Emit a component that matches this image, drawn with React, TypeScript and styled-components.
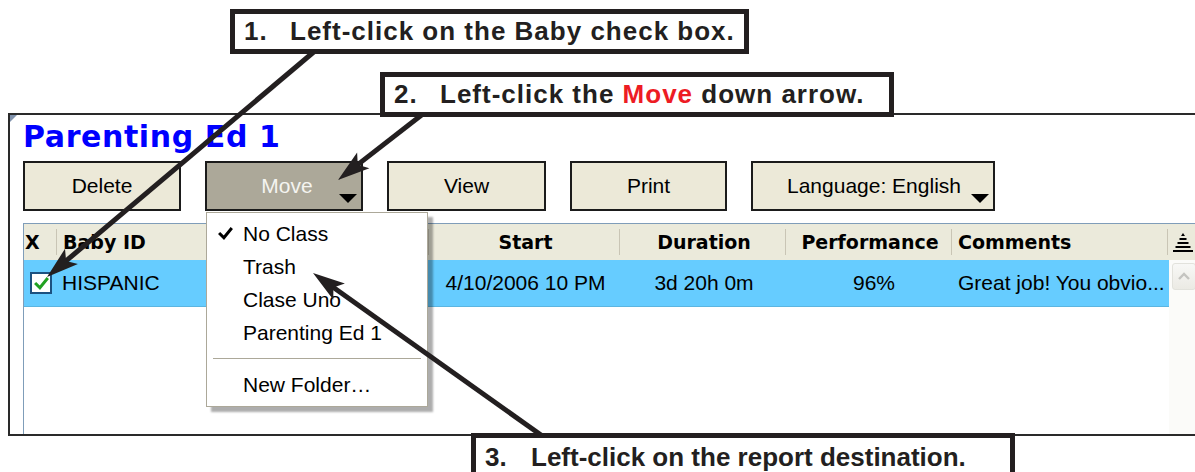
import React from 'react';
import styled, { createGlobalStyle, css } from 'styled-components';

const GlobalStyle = createGlobalStyle`
  html, body {
    margin: 0;
    padding: 0;
    background: #fff;
  }
`;

const uiFont = `'Liberation Sans', Arial, sans-serif`;
const boldUiFont = `'DejaVu Sans', Verdana, sans-serif`;
const ink = '#231f20';

// column widths shared by the list header and the rows
const columns = [
  { w: 34, align: 'left', pad: 1 },
  { w: 372, align: 'left', pad: 5 },
  { w: 191, align: 'center', pad: 0 },
  { w: 166, align: 'center', pad: 0 },
  { w: 166, align: 'center', pad: 0 },
  { w: 216, align: 'left', pad: 5 },
];

const Page = styled.div`
  position: relative;
  width: 1195px;
  height: 472px;
  overflow: hidden;
  box-sizing: border-box;
  padding: 113px 0 0 8px;
  background: #fff;
`;

const Window = styled.section`
  position: relative;
  width: 1195px;
  height: 323px;
  box-sizing: border-box;
  border: 2px solid #2a2a2a;
  border-right: none;
  display: flex;
  flex-direction: column;

  &::before {
    content: '';
    position: absolute;
    top: 0;
    left: 0;
    border-top: 7px solid #8193ad;
    border-right: 7px solid transparent;
  }
`;

const Title = styled.h1`
  margin: 0;
  padding: 7px 0 0 13px;
  font: 700 30px/30px ${boldUiFont};
  letter-spacing: 0.6px;
  color: #0000ff;
`;

const Toolbar = styled.div`
  display: flex;
  gap: 24px;
  margin-top: 9px;
  padding-left: 13px;
`;

const Button = styled.button<{ $w: number; $open?: boolean; $left?: boolean }>`
  position: relative;
  width: ${(p) => p.$w}px;
  height: 50px;
  box-sizing: border-box;
  border: 2px solid #1b1b1b;
  background: #ece9d8;
  color: #000;
  font: 21px ${uiFont};
  display: flex;
  align-items: center;
  justify-content: center;
  padding: 0;

  ${(p) =>
    p.$open &&
    css`
      background: #aca899;
      color: #f4f4f0;
      padding-left: 6px;
    `}

  ${(p) =>
    p.$left &&
    css`
      justify-content: flex-start;
      padding-left: 34px;
    `}
`;

const Caret = styled.span`
  position: absolute;
  right: 4px;
  bottom: 6px;
  width: 0;
  height: 0;
  border-left: 9px solid transparent;
  border-right: 9px solid transparent;
  border-top: 9px solid #000;
`;

const List = styled.div`
  flex: 1;
  margin: 12px 0 0 13px;
  border-top: 1px solid #7f9db9;
  border-left: 1px solid #7f9db9;
  display: flex;
  flex-direction: column;
`;

const HeaderRow = styled.div`
  display: flex;
  height: 36px;
  background: #ebeadb;
  font: 700 19px ${boldUiFont};
  color: #000;
`;

const separator = css`
  background: linear-gradient(#c9c5b5, #c9c5b5) right 1px center / 1px 26px no-repeat;
`;

const Cell = styled.div<{ $w: number; $align: string; $pad: number }>`
  flex: none;
  width: ${(p) => p.$w}px;
  box-sizing: border-box;
  padding-left: ${(p) => p.$pad}px;
  display: flex;
  align-items: center;
  justify-content: ${(p) => (p.$align === 'center' ? 'center' : 'flex-start')};
  white-space: nowrap;
  overflow: hidden;
`;

const HeadCell = styled(Cell)`
  ${separator}
`;

const SortCell = styled.div`
  flex: 1;
  display: flex;
  align-items: center;
  padding-left: 4px;
`;

const Body = styled.div`
  flex: 1;
  display: flex;
`;

const Rows = styled.div`
  width: 1145px;
  flex: none;
`;

const Row = styled.div<{ $selected?: boolean }>`
  display: flex;
  height: 47px;
  box-sizing: border-box;
  font: 21px ${uiFont};
  color: #000;
  background: ${(p) => (p.$selected ? '#66ccff' : 'transparent')};
  border-bottom: 1px solid ${(p) => (p.$selected ? '#5cb5e0' : 'transparent')};
`;

const Checkbox = styled.span`
  width: 22px;
  height: 22px;
  box-sizing: border-box;
  margin-left: 5px;
  border: 2px solid #1c5180;
  background: #fff;
  display: flex;
  align-items: center;
  justify-content: center;
`;

const ScrollBar = styled.div`
  flex: 1;
  background: #fbfbf9;
  padding: 3px 0 0 3px;
`;

const ScrollUp = styled.div`
  width: 24px;
  height: 27px;
  box-sizing: border-box;
  border: 1px solid #e2e2dc;
  border-radius: 3px;
  background: linear-gradient(#f8f8f6, #ebeae4);
  display: flex;
  align-items: center;
  justify-content: center;
`;

const Menu = styled.ul`
  position: absolute;
  left: 196px;
  top: 97px;
  width: 222px;
  margin: 0;
  padding: 4px 0 5px;
  list-style: none;
  box-sizing: border-box;
  border: 1px solid #aca899;
  background: #fff;
  box-shadow: 5px 5px 2px rgba(0, 0, 0, 0.32);
  font: 21px ${uiFont};
  color: #000;
`;

const MenuItem = styled.li`
  height: 33px;
  display: flex;
  align-items: center;
  padding-left: 11px;
`;

const CheckSlot = styled.span`
  width: 25px;
  flex: none;
  display: flex;
  align-items: center;
`;

const MenuSeparator = styled.li`
  margin: 9px 6px;
  border-top: 1px solid #aca899;
`;

const Callout = styled.div<{ $x: number; $y: number; $w: number; $h?: number; $ls?: number }>`
  position: absolute;
  z-index: 3;
  left: ${(p) => p.$x}px;
  top: ${(p) => p.$y}px;
  width: ${(p) => p.$w}px;
  height: ${(p) => p.$h ?? 45}px;
  box-sizing: border-box;
  border: 5px solid ${ink};
  background: #fff;
  padding: 0 0 0 9px;
  display: flex;
  align-items: ${(p) => (p.$h ? 'flex-start' : 'center')};
  padding-top: ${(p) => (p.$h ? 2 : 0)}px;
  font: 700 26px/35px ${uiFont};
  letter-spacing: ${(p) => p.$ls ?? 0}px;
  color: ${ink};
  white-space: nowrap;
`;

const Step = styled.span`
  display: inline-block;
  width: 46px;
  flex: none;
`;

const Red = styled.span`
  color: #ed1c24;
`;

const Overlay = styled.svg`
  position: absolute;
  z-index: 2;
  left: 0;
  top: 0;
  pointer-events: none;
`;

const arrow = (x1: number, y1: number, x2: number, y2: number) => {
  const len = 32;
  const half = 10;
  const d = Math.hypot(x2 - x1, y2 - y1);
  const ux = (x2 - x1) / d;
  const uy = (y2 - y1) / d;
  const bx = x2 - ux * len;
  const by = y2 - uy * len;
  const nx = x2 - ux * (len - 7);
  const ny = y2 - uy * (len - 7);
  const px = -uy;
  const py = ux;
  return {
    line: `M${x1} ${y1} L${nx + ux * 2} ${ny + uy * 2}`,
    head: `${x2},${y2} ${bx + px * half},${by + py * half} ${nx},${ny} ${bx - px * half},${by - py * half}`,
  };
};

const arrows = [arrow(322, 45, 47, 277), arrow(428, 110, 338, 180), arrow(548, 440, 313, 273)];

const TickIcon = ({ color, size }: { color: string; size: number }) => (
  <svg width={size} height={size} viewBox="0 0 14 14">
    <path d="M2 7.5 L5.5 11 L12 3" fill="none" stroke={color} strokeWidth="2.8" strokeLinecap="square" />
  </svg>
);

const SortIcon = () => (
  <svg width="20" height="19" viewBox="0 0 20 19">
    <path d="M10 0 L12 3 L8 3 Z" fill="#000" />
    <rect x="6.5" y="5" width="7" height="2" fill="#000" />
    <rect x="4.5" y="9" width="11" height="2" fill="#000" />
    <rect x="2.5" y="13" width="15" height="2" fill="#000" />
    <rect x="0" y="17" width="20" height="2" fill="#000" />
  </svg>
);

const Chevron = () => (
  <svg width="14" height="9" viewBox="0 0 14 9">
    <path d="M2 7 L7 2 L12 7" fill="none" stroke="#c4c4c0" strokeWidth="2.4" />
  </svg>
);

const headerCells = ['X', 'Baby ID', 'Start', 'Duration', 'Performance', 'Comments'];

const rowCells = ['HISPANIC', '4/10/2006 10 PM', '3d 20h 0m', '96%', 'Great job! You obvio...'];

const menuItems = ['No Class', 'Trash', 'Clase Uno', 'Parenting Ed 1'];

export default function App() {
  return (
    <Page>
      <GlobalStyle />
      <Window>
        <Title>Parenting Ed 1</Title>
        <Toolbar>
          <Button $w={158}>Delete</Button>
          <Button $w={158} $open>
            Move
            <Caret />
          </Button>
          <Button $w={159}>View</Button>
          <Button $w={157}>Print</Button>
          <Button $w={244} $left>
            Language: English
            <Caret />
          </Button>
        </Toolbar>
        <List>
          <HeaderRow>
            {headerCells.map((h, i) => (
              <HeadCell key={h} $w={columns[i].w} $align={columns[i].align} $pad={columns[i].pad}>
                {h}
              </HeadCell>
            ))}
            <SortCell>
              <SortIcon />
            </SortCell>
          </HeaderRow>
          <Body>
            <Rows>
              <Row $selected>
                <Cell $w={columns[0].w} $align="left" $pad={1}>
                  <Checkbox>
                    <TickIcon color="#21a121" size={15} />
                  </Checkbox>
                </Cell>
                {rowCells.map((text, i) => (
                  <Cell
                    key={text}
                    $w={columns[i + 1].w}
                    $align={columns[i + 1].align}
                    $pad={i === 0 ? 4 : i === 3 ? 8 : columns[i + 1].pad}
                  >
                    {text}
                  </Cell>
                ))}
              </Row>
            </Rows>
            <ScrollBar>
              <ScrollUp>
                <Chevron />
              </ScrollUp>
            </ScrollBar>
          </Body>
        </List>
        <Menu>
          {menuItems.map((item, i) => (
            <MenuItem key={item}>
              <CheckSlot>{i === 0 && <TickIcon color="#000" size={15} />}</CheckSlot>
              {item}
            </MenuItem>
          ))}
          <MenuSeparator />
          <MenuItem>
            <CheckSlot />
            New Folder…
          </MenuItem>
        </Menu>
      </Window>

      <Overlay width="1195" height="472" viewBox="0 0 1195 472">
        {arrows.map((a, i) => (
          <g key={i}>
            <path d={a.line} stroke={ink} strokeWidth="5" fill="none" />
            <polygon points={a.head} fill={ink} />
          </g>
        ))}
      </Overlay>

      <Callout $x={230} $y={9} $w={519} $ls={1}>
        <Step>1.</Step>
        Left-click on the Baby check box.
      </Callout>
      <Callout $x={380} $y={72} $w={514} $ls={1}>
        <Step>2.</Step>
        <span>
          Left-click the <Red>Move</Red> down arrow.
        </span>
      </Callout>
      <Callout $x={471} $y={433} $w={544} $h={50}>
        <Step>3.</Step>
        Left-click on the report destination.
      </Callout>
    </Page>
  );
}
